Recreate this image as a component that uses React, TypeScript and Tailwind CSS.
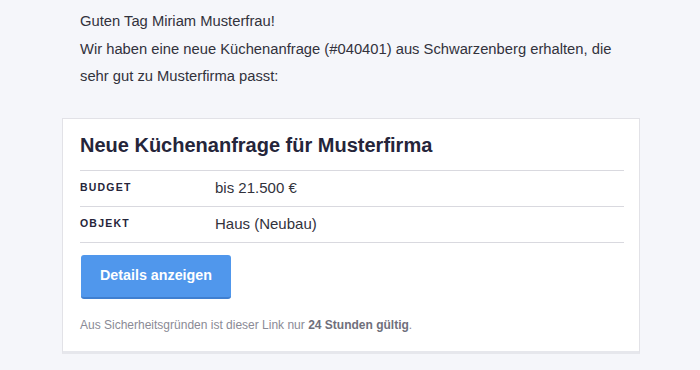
export default function App() {
  const font = { fontFamily: '"Liberation Sans", Arial, sans-serif' };
  return (
    <div className="w-[700px] h-[370px] bg-[#f5f6fa] overflow-hidden" style={font}>
      <div className="pl-[80px] pt-[8px] text-[14.75px] leading-[27.5px] text-[#32323c]">
        <div>Guten Tag Miriam Musterfrau!</div>
        <div>Wir haben eine neue Küchenanfrage (#040401) aus Schwarzenberg erhalten, die</div>
        <div>sehr gut zu Musterfirma passt:</div>
      </div>
      <div className="ml-[62px] mt-[27px] w-[578px] bg-white border border-[#e2e2e7] border-b-[3px] border-b-[#e6e7ec] pl-[17px] pr-[15px] pt-[14px] pb-[18px]">
        <div className="text-[20px] leading-[24px] font-bold text-[#25253a]">Neue Küchenanfrage für Musterfirma</div>
        <div className="mt-[13px] border-t border-[#d9d9df]">
          <div className="flex items-center h-[36px] border-b border-[#d9d9df]">
            <div className="w-[135px] text-[10.5px] font-bold tracking-[1.2px] text-[#25253a]">BUDGET</div>
            <div className="text-[15px] text-[#32323c]">bis 21.500 €</div>
          </div>
          <div className="flex items-center h-[36px] border-b border-[#d9d9df]">
            <div className="w-[135px] text-[10.5px] font-bold tracking-[1.2px] text-[#25253a]">OBJEKT</div>
            <div className="text-[15px] text-[#32323c]">Haus (Neubau)</div>
          </div>
        </div>
        <div className="mt-[12px] ml-[1px] w-[150px] h-[44px] rounded-[3px] bg-[#5097ec] border-b-[2px] border-[#3f7fd0] flex items-center justify-center text-white text-[14.3px] font-bold">
          Details anzeigen
        </div>
        <div className="mt-[18px] text-[12px] leading-[16px] text-[#8a8a95]">
          Aus Sicherheitsgründen ist dieser Link nur <span className="font-bold text-[#6f6f7b]">24 Stunden gültig</span>.
        </div>
      </div>
    </div>
  );
}
